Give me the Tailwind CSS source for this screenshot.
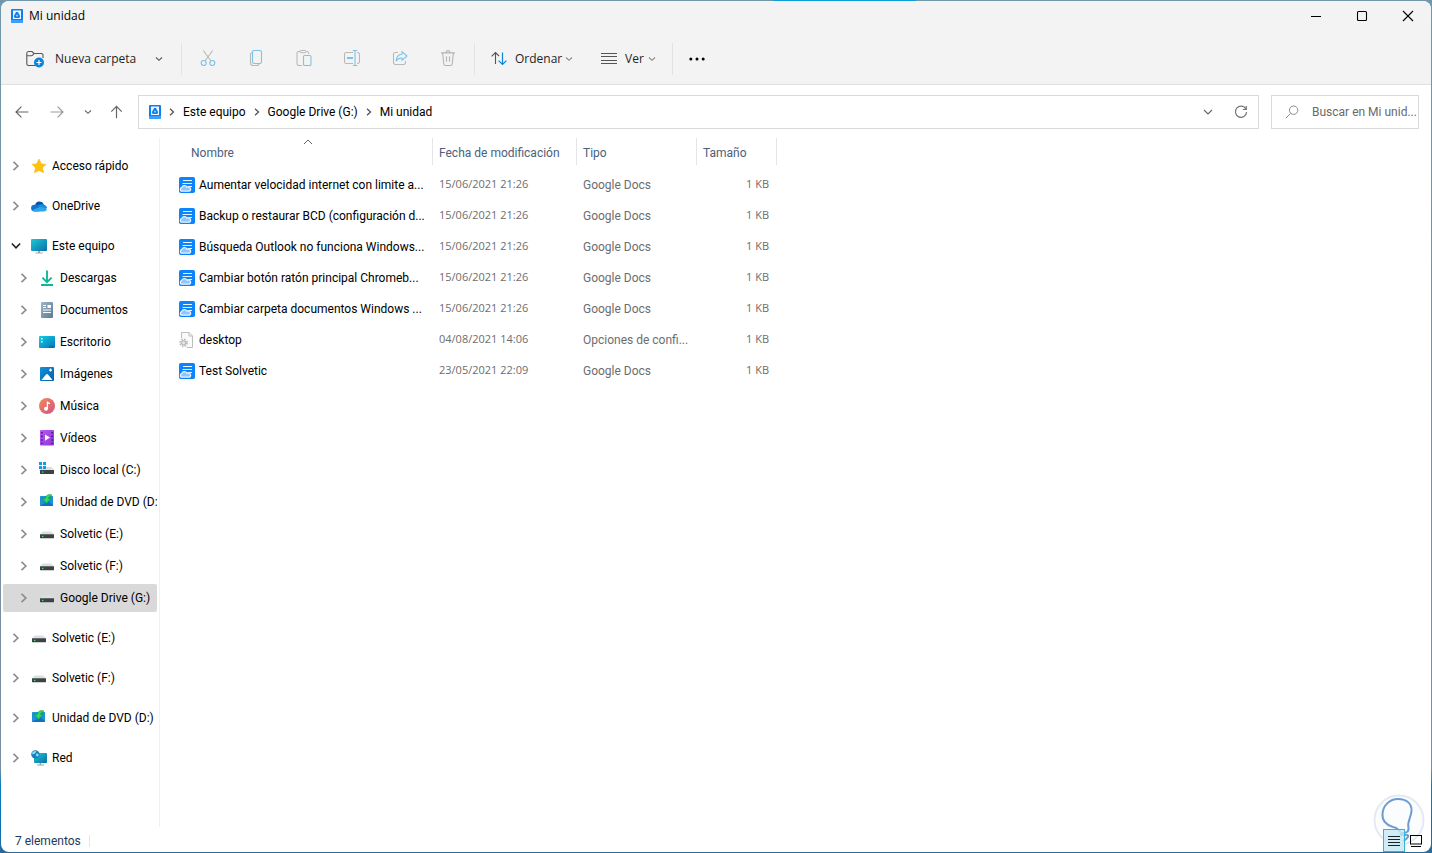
<!DOCTYPE html>
<html lang="es">
<head>
  <meta charset="UTF-8" />
  <meta name="viewport" content="width=device-width, initial-scale=1.0"/>
  <title>Mi unidad</title>
  <script src="https://cdn.jsdelivr.net/npm/@tailwindcss/browser@4"></script>
</head>
<body class="relative h-screen overflow-hidden p-px font-['Open_Sans','Noto_Sans',sans-serif] text-xs text-black bg-[linear-gradient(#7097ab_0,#7b8fa0_50%,#7b8fa0_90%,#0a7fbf_92%,#0a6fae_97%,#2a6a9c_100%)]">
  <div class="absolute top-0 left-[54%] w-[10%] h-px bg-[#0a9fd8]"></div>

  <!-- icon sprites -->
  <svg class="absolute h-0 w-0" xmlns="http://www.w3.org/2000/svg">
    <defs>
      <linearGradient id="g-screen" x1="0" y1="0" x2="1" y2="1"><stop offset="0" stop-color="#1bc8d8"/><stop offset="1" stop-color="#0a6fa5"/></linearGradient>
      <linearGradient id="g-desk" x1="0" y1="0" x2="1" y2="1"><stop offset="0" stop-color="#10cfe0"/><stop offset="1" stop-color="#0874bd"/></linearGradient>
      <linearGradient id="g-doc" x1="0" y1="0" x2="1" y2="1"><stop offset="0" stop-color="#9db6c9"/><stop offset="1" stop-color="#5b7a98"/></linearGradient>
      <linearGradient id="g-img" x1="0" y1="0" x2="1" y2="1"><stop offset="0" stop-color="#1590dc"/><stop offset="1" stop-color="#0560a8"/></linearGradient>
      <linearGradient id="g-music" x1="0" y1="0" x2="1" y2="1"><stop offset="0" stop-color="#f5885a"/><stop offset="1" stop-color="#cf5484"/></linearGradient>
      <linearGradient id="g-video" x1="0" y1="0" x2="1" y2="1"><stop offset="0" stop-color="#b85cf0"/><stop offset="1" stop-color="#8d35d6"/></linearGradient>
    </defs>
    <symbol id="i-chev" viewBox="0 0 8 8"><path d="M2 .7 5.5 4 2 7.3" fill="none" stroke="currentColor" stroke-width="1.3"/></symbol>
    <symbol id="i-down" viewBox="0 0 8 8"><path d="M1 2.5 4 5.3 7 2.5" fill="none" stroke="currentColor" stroke-width="1.1"/></symbol>
    <symbol id="i-drive" viewBox="0 0 12 14">
      <rect width="12" height="14" rx="1" fill="#0f7ff0"/>
      <rect x="2" y="1.500" width="8" height="8.500" fill="#eef7ff"/>
      <path d="M5 3h2L9.200 7.200 8.300 9H3.700L2.800 7.200Z" fill="#0f7ff0"/>
      <path d="M6 5.400 7 7.200H5Z" fill="#eef7ff"/>
      <path d="M0 11h12v2q0 1-1 1H1q-1 0-1-1Z" fill="#3aa0ff"/>
    </symbol>
    <symbol id="i-star" viewBox="0 0 16 16"><path d="M8 1.200 10.200 5.900 14.800 6.400 11.400 9.800 12.400 14.600 8 12.300 3.600 14.600 4.600 9.800 1.200 6.400 5.800 5.900Z" fill="#fdc20c" stroke="#f9bb06" stroke-width=".8" stroke-linejoin="round"/></symbol>
    <symbol id="i-onedrive" viewBox="0 0 16 16">
      <path d="M4 7.200A4.700 4.700 0 0 1 12.900 6.400L9 10Z" fill="#0a53a8"/>
      <path d="M3.400 13.400A3.300 3.300 0 0 1 3.500 6.700Q5.400 5.900 7.400 7.200L12 10 8 13.400Z" fill="#1173cf"/>
      <path d="M7.200 7.400Q9.800 5.800 12.400 6.400 16 7.200 16 10.300L12 11.600Z" fill="#1490df"/>
      <path d="M1 12.200 9.200 8.700 15.900 10.800Q15.600 13.400 12.800 13.400H3.400Q2 13.300 1 12.200Z" fill="#2aa8ea"/>
    </symbol>
    <symbol id="i-pc" viewBox="0 0 16 16">
      <rect y="1" width="16" height="12" rx="1" fill="url(#g-screen)"/>
      <path d="M7 13h2v1.400H7zM4.500 14.400h7v1h-7z" fill="#9aa7b0"/>
    </symbol>
    <symbol id="i-dl" viewBox="0 0 16 16"><path d="M8 .4V12M3.400 7.600 8 12.100 12.600 7.600M2 15h12" fill="none" stroke="#12b594" stroke-width="1.900"/></symbol>
    <symbol id="i-doc" viewBox="0 0 16 16">
      <rect x="2" width="12" height="16" rx="1" fill="url(#g-doc)"/>
      <path d="M4 3.500h3M4 5.500h3M4 8h8M4 10.500h8" stroke="#fff" stroke-width="1"/><rect x="8.500" y="3" width="3.500" height="3" fill="#fff"/>
    </symbol>
    <symbol id="i-desk" viewBox="0 0 16 16">
      <rect y="2" width="16" height="12" rx="1" fill="url(#g-desk)"/>
      <path d="M2 4h1.500v1.500H2zM2 7h1.500v1.500H2z" fill="#fff"/><path d="M10 13h1.500M12.500 13H14" stroke="#064a80"/>
    </symbol>
    <symbol id="i-img" viewBox="0 0 16 16">
      <rect x="1" y="1" width="14" height="14" rx="1" fill="url(#g-img)"/>
      <path d="M2.500 14 7 8.600Q8 7.600 9 8.600L13.500 14Z" fill="#fff"/><path d="M11.500 2.600v3M10 4.100h3" stroke="#fff" stroke-width="1.200"/>
    </symbol>
    <symbol id="i-music" viewBox="0 0 16 16">
      <circle cx="8" cy="8" r="8" fill="url(#g-music)"/>
      <path d="M8.400 10.600V3.600Q9 5.400 11 5.600" fill="none" stroke="#fff" stroke-width="1.300"/><circle cx="7" cy="10.800" r="2" fill="#fff"/>
    </symbol>
    <symbol id="i-video" viewBox="0 0 16 16">
      <rect x="1" y="0" width="14" height="15.500" rx="1" fill="url(#g-video)"/>
      <path d="M6 4.400 11 7.600 6 10.800Z" fill="#fff"/>
      <path d="M2.900 2v12M13.100 2v12" stroke="#4c1687" stroke-width="1.600" stroke-dasharray="1.600 2"/>
    </symbol>
    <symbol id="i-hdd" viewBox="0 0 16 16">
      <path d="M3.600 5.500h8.800L15 8.500H1Z" fill="#dcdfe1"/><rect x="1" y="8.200" width="14" height="4" rx=".4" fill="#3d4245"/><rect x="3" y="9.800" width="1.400" height="1.200" fill="#4be07a"/>
    </symbol>
    <symbol id="i-disk" viewBox="0 0 16 16">
      <path d="M3.600 5h8.800L15 8H1Z" fill="#dcdfe1"/><rect x="1" y="8" width="14" height="4" rx=".4" fill="#3d4245"/><rect x="3" y="9.500" width="1.400" height="1.200" fill="#4be07a"/>
      <path d="M0 0h3v3H0zM4 0h3v3H4zM0 4h3v3H0zM4 4h3v3H4z" fill="#0f9be8"/>
    </symbol>
    <symbol id="i-dvd" viewBox="0 0 16 16">
      <rect x="1" y="2" width="13" height="10" rx=".8" fill="#1f8fdd"/><path d="M1 12 9 7l5 4.200q0 .8-.8.8Z" fill="#1570bd"/>
      <path d="M12.400.6Q7 0 6.200 4.400H3.400L7.600 9.400 11.600 4.400H9.400Q9.400 2.600 12.400 2.200Z" fill="#2bdc63" stroke="#128a3a" stroke-width=".5"/>
    </symbol>
    <symbol id="i-net" viewBox="0 0 16 16">
      <rect x="3" y="3" width="13" height="10" rx=".8" fill="url(#g-screen)"/><path d="M8.600 13h1.600v1.600H8.600zM6 14.500h7v1H6z" fill="#9aa7b0"/>
      <circle cx="4.400" cy="4.400" r="4.200" fill="#1a7fc0"/><path d="M1.200 2.600Q3 .6 5.400 1.200L4 3.600 1.400 4.600ZM5.600 3.200 8 4.400 6.600 6.800 4.800 5.400Z" fill="#8fe0f4"/>
    </symbol>
    <symbol id="i-gdoc" viewBox="0 0 16 16">
      <rect width="16" height="16" rx="1.800" fill="#0c84fb"/>
      <path d="M4 3.500h9M3.500 6.500h9.500M10 9.500h3" stroke="#e8f4ff" stroke-width="1.200"/>
      <path d="M2.200 14.200A2.100 2.100 0 0 1 2.600 10.600 2.900 2.900 0 0 1 8 10.200 2.200 2.200 0 0 1 10.400 14.200Z" fill="#8cc6ff" stroke="#e8f4ff" stroke-width="1.200"/>
    </symbol>
    <symbol id="i-ini" viewBox="0 0 16 16">
      <path d="M2.500 6V.5H10L13.500 4v11.500H8M10 .5V4h3.500" fill="#fafafa" stroke="#bdbdbd"/>
      <circle cx="4.600" cy="10.800" r="3.400" fill="none" stroke="#c2c2c2" stroke-width="2" stroke-dasharray="1.600 1.070"/><circle cx="4.600" cy="10.800" r="2.200" fill="#e4e4e4" stroke="#b0b0b0"/>
    </symbol>
  </svg>

  <div class="relative flex h-full flex-col overflow-hidden rounded-lg bg-white">
    <!-- title bar -->
    <header class="flex h-[30px] shrink-0 items-center bg-[#f3f3f3] pl-2.5">
      <svg class="h-3.5 w-3"><use href="#i-drive"/></svg>
      <h1 class="ml-1.5">Mi unidad</h1>
      <div class="ml-auto flex">
        <button aria-label="Minimizar" class="flex h-7 w-[46px] items-center justify-center"><svg class="h-3 w-3" viewBox="0 0 12 12"><path d="M1 6.500h10" stroke="#000"/></svg></button>
        <button aria-label="Maximizar" class="flex h-7 w-[46px] items-center justify-center"><svg class="h-3 w-3" viewBox="0 0 12 12"><rect x="1.500" y="1.500" width="9" height="9" rx="1" fill="none" stroke="#000" stroke-width="1.100"/></svg></button>
        <button aria-label="Cerrar" class="flex h-7 w-[46px] items-center justify-center"><svg class="h-3 w-3" viewBox="0 0 12 12"><path d="m1 1 10 10M11 1 1 11" stroke="#000" stroke-width="1.100"/></svg></button>
      </div>
    </header>

    <!-- toolbar -->
    <div class="flex h-[54px] shrink-0 items-center border-b border-[#e1e1e1] bg-[#f3f3f3] pt-0.5 pl-[25px] text-[#1f1f1f]">
      <button class="flex w-[155px] items-center pr-[18px]">
        <svg class="h-[18px] w-[18px]" viewBox="0 0 18 18">
          <path d="M9 15.500H2.500A1.800 1.800 0 0 1 .8 13.700V3.300A1.800 1.800 0 0 1 2.500 1.500H6L8 3.500h7.300a1.700 1.700 0 0 1 1.700 1.700V8M.8 5.800H5.400Q6.400 5.800 8 3.500" fill="none" stroke="#555" stroke-width="1.100"/>
          <circle cx="13" cy="12.500" r="5" fill="#0a84d8"/><path d="M13 10v5M10.500 12.500h5" stroke="#fff" stroke-width="1.200"/>
        </svg>
        <span class="ml-[11px]">Nueva carpeta</span>
        <svg class="ml-auto h-2 w-2 text-[#555]"><use href="#i-down"/></svg>
      </button>
      <span class="h-8 w-px bg-[#e2e2e2]"></span>
      <div class="flex gap-8 px-[18px] pb-0.5">
        <button aria-label="Cortar"><svg class="block h-4 w-4" viewBox="0 0 16 16"><path d="M3.300.5 11 11M12.700.5 5 11" stroke="#b9b9b9" stroke-width="1.100"/><g fill="none" stroke="#7cc3ea" stroke-width="1.200"><circle cx="3.700" cy="13" r="2.500"/><circle cx="12.300" cy="13" r="2.500"/></g></svg></button>
        <button aria-label="Copiar"><svg class="block h-4 w-4" viewBox="0 0 16 16"><path d="M4 2.500Q2.500 3 2.500 4.500v8.200a2.800 2.800 0 0 0 2.800 2.800H9q1.500 0 2-1.500" fill="none" stroke="#b9b9b9" stroke-width="1.100"/><rect x="4.500" y=".5" width="9" height="13" rx="1.800" fill="#f3f3f3" stroke="#7cc3ea" stroke-width="1.100"/></svg></button>
        <button aria-label="Pegar"><svg class="block h-4 w-4" viewBox="0 0 16 16"><path d="M6 15.500H2.800A1.800 1.800 0 0 1 1 13.700V3.300a1.800 1.800 0 0 1 1.800-1.800H4m6 0h1A1.800 1.800 0 0 1 12.700 3.300V4" fill="none" stroke="#b9b9b9" stroke-width="1.100"/><rect x="4" y=".5" width="6" height="2.200" rx="1" fill="none" stroke="#b9b9b9"/><rect x="7.500" y="5.500" width="7.500" height="10" rx="1.200" fill="#f3f3f3" stroke="#7cc3ea" stroke-width="1.100"/></svg></button>
        <button aria-label="Cambiar nombre"><svg class="block h-4 w-4" viewBox="0 0 16 16"><path d="M9 2.500H2.300A1.800 1.800 0 0 0 .5 4.300v7.400a1.800 1.800 0 0 0 1.800 1.800H9m4-11h.7a1.800 1.800 0 0 1 1.800 1.800v7.400a1.800 1.800 0 0 1-1.800 1.800H13" fill="none" stroke="#b9b9b9" stroke-width="1.100"/><path d="M3 8h6" stroke="#7cc3ea" stroke-width="2"/><path d="M11 .5v15M8.800.5h4.400M8.800 15.500h4.400" stroke="#7cc3ea" stroke-width="1.100"/></svg></button>
        <button aria-label="Compartir"><svg class="block h-4 w-4" viewBox="0 0 16 16"><path d="M6 2.500H3.300A1.800 1.800 0 0 0 1.500 4.300v8.400a1.800 1.800 0 0 0 1.800 1.800h8.400a1.800 1.800 0 0 0 1.800-1.800V11" fill="none" stroke="#b9b9b9" stroke-width="1.100"/><path d="M10 1.600 15 6l-5 4.400V8Q6.400 7.600 4.200 11 4.600 4.600 10 4.200Z" fill="none" stroke="#7cc3ea" stroke-width="1.100" stroke-linejoin="round"/></svg></button>
        <button aria-label="Eliminar"><svg class="block h-4 w-4" viewBox="0 0 16 16"><path d="M1 2.900h14M5.800 2.700Q6 .6 8 .6t2.200 2.100M2.600 3 3.800 14q.2 1.500 1.600 1.500h5.200q1.400 0 1.600-1.500L13.400 3M6.500 6.200v5.600M9.500 6.200v5.600" fill="none" stroke="#b4b4b4" stroke-width="1.100"/></svg></button>
      </div>
      <span class="h-8 w-px bg-[#e2e2e2]"></span>
      <button class="ml-4 flex w-[82px] items-center">
        <svg class="h-4 w-4" viewBox="0 0 16 16"><path d="M4.500 13V1.600M.6 5.400 4.500 1.500 8 5" fill="none" stroke="#555" stroke-width="1.100"/><path d="M11.500 1.500v12M7.600 9.600l3.900 3.900 3.900-3.900" fill="none" stroke="#0a84d8" stroke-width="1.200"/></svg>
        <span class="ml-2">Ordenar</span>
        <svg class="ml-auto h-2 w-2 text-[#888]"><use href="#i-down"/></svg>
      </button>
      <button class="ml-7 flex w-[55px] items-center">
        <svg class="h-4 w-4" viewBox="0 0 16 16"><path d="M0 2.500h16M0 5.500h16M0 9.500h16M0 12.500h16" stroke="#555"/></svg>
        <span class="ml-2">Ver</span>
        <svg class="ml-auto h-2 w-2 text-[#888]"><use href="#i-down"/></svg>
      </button>
      <span class="ml-4 h-8 w-px bg-[#e2e2e2]"></span>
      <button aria-label="Más opciones" class="ml-4"><svg class="block h-4 w-4" viewBox="0 0 16 16"><circle cx="1.800" cy="8" r="1.500"/><circle cx="8" cy="8" r="1.500"/><circle cx="14.200" cy="8" r="1.500"/></svg></button>
    </div>

    <!-- navigation and address -->
    <div class="flex h-[53px] shrink-0 items-center pr-3 pl-3.5">
      <nav class="flex w-[123px] items-center text-[#666]">
        <button aria-label="Atrás"><svg class="block h-3.5 w-3.5" viewBox="0 0 14 14"><path d="M13.400 7H1.200M6.400 1.600 1 7l5.400 5.400" fill="none" stroke="currentColor" stroke-width="1.200"/></svg></button>
        <button aria-label="Adelante" class="ml-[21px] text-[#999]"><svg class="block h-3.5 w-3.5" viewBox="0 0 14 14"><path d="M.6 7h12.200M7.600 1.600 13 7l-5.400 5.400" fill="none" stroke="currentColor" stroke-width="1.200"/></svg></button>
        <button aria-label="Ubicaciones recientes" class="ml-5"><svg class="block h-2 w-2"><use href="#i-down"/></svg></button>
        <button aria-label="Subir" class="ml-[18px]"><svg class="block h-3.5 w-3.5" viewBox="0 0 14 14"><path d="M6.500 13.200V1.400M1.300 6.600 6.500 1.400l5.200 5.200" fill="none" stroke="currentColor" stroke-width="1.200"/></svg></button>
      </nav>
      <div class="flex h-[34px] flex-1 items-center border border-[#d9d9d9] px-2.5 font-[Roboto,sans-serif]">
        <svg class="h-3.5 w-3"><use href="#i-drive"/></svg>
        <svg class="mx-[7px] h-2 w-2 text-[#555]"><use href="#i-chev"/></svg>
        <a href="#">Este equipo</a>
        <svg class="mx-[7px] h-2 w-2 text-[#555]"><use href="#i-chev"/></svg>
        <a href="#">Google Drive (G:)</a>
        <svg class="mx-[7px] h-2 w-2 text-[#555]"><use href="#i-chev"/></svg>
        <a href="#">Mi unidad</a>
        <button aria-label="Ubicaciones anteriores" class="ml-auto"><svg class="block h-2.5 w-2.5" viewBox="0 0 10 10"><path d="M1 3 5 7l4-4" fill="none" stroke="#666" stroke-width="1.100"/></svg></button>
        <button aria-label="Actualizar" class="ml-[21px]"><svg class="block h-3.5 w-3.5" viewBox="0 0 14 14"><path d="M12 4.200A5.600 5.600 0 1 0 12.600 7M12.300 1v3.500H8.800" fill="none" stroke="#777" stroke-width="1.200"/></svg></button>
      </div>
      <label class="ml-3 flex h-[34px] w-[148px] items-center border border-[#d9d9d9] pl-[13px]">
        <svg class="h-3.5 w-3.5 shrink-0" viewBox="0 0 14 14"><circle cx="8.600" cy="5.200" r="4.200" fill="none" stroke="#8a8a8a"/><path d="M5.600 8.400.8 13.200" stroke="#8a8a8a"/></svg>
        <input type="text" aria-label="Buscar" placeholder="Buscar en Mi unid..." class="ml-[13px] w-full min-w-0 font-[Roboto,sans-serif] outline-none placeholder:text-[#6a6a6a]"/>
      </label>
    </div>

    <div class="flex min-h-0 flex-1">
      <aside class="w-[159px] shrink-0 border-r border-[#f0f0f0] px-0.5 pt-0.5 font-[Roboto,sans-serif]">
        <ul id="tree"></ul>
      </aside>
      <main class="flex-1 overflow-hidden font-[Roboto,sans-serif]">
        <table class="w-[617px] table-fixed text-left text-[#6d6d6d]">
          <colgroup><col class="w-[273px]"/><col class="w-36"/><col class="w-[120px]"/><col class="w-20"/></colgroup>
          <thead class="text-[#4c607a]">
            <tr class="h-[31px] align-top">
              <th class="p-0 font-normal"><div class="relative h-[27px] border-r border-[#e5e5e5] pl-[31px] leading-[30px]">Nombre
                <svg class="absolute top-0 left-[143px] h-2 w-2.5" viewBox="0 0 10 8"><path d="M1 6 5 2l4 4" fill="none" stroke="#666"/></svg></div></th>
              <th class="p-0 font-normal"><div class="h-[27px] border-r border-[#e5e5e5] pl-1.5 leading-[30px]">Fecha de modificación</div></th>
              <th class="p-0 font-normal"><div class="h-[27px] border-r border-[#e5e5e5] pl-1.5 leading-[30px]">Tipo</div></th>
              <th class="p-0 font-normal"><div class="h-[27px] border-r border-[#e5e5e5] pl-1.5 leading-[30px]">Tamaño</div></th>
            </tr>
          </thead>
          <tbody id="files"></tbody>
        </table>
      </main>
    </div>

    <footer class="flex h-[25px] shrink-0 items-center pt-0.5 pl-3.5 font-[Roboto,sans-serif] text-[#1e395b]">
      <span class="w-[74px]">7 elementos</span>
      <span class="h-3 w-px bg-[#e5e5e5]"></span>
    </footer>

    <!-- floating logo and view switches -->
    <svg class="absolute right-1.5 bottom-1.5 h-[52px] w-[52px]" viewBox="0 0 52 52">
      <circle cx="26" cy="26" r="24.500" fill="#fbfcfe" stroke="#e3eaf4" stroke-width="2"/>
      <path d="M20 33C13 31 9 26 9.500 20 10 11 17 5 25 5 34 5 39 10 38.500 17 38 24 34 27 35.500 34 36 38 33 39 29 39 26 40 28 42 32 41 37 40 36 44 30 47M20 33Q25 34 27 38" fill="none" stroke="#6d9bd2" stroke-width="2"/>
    </svg>
    <div class="absolute right-1 bottom-0 flex items-center">
      <button aria-label="Detalles" class="flex h-[23px] w-[22px] items-center justify-center border border-[#33b5d8] bg-[#c3e9f5]/80"><svg class="h-3 w-3" viewBox="0 0 12 12"><path d="M0 1.500h12M0 4.500h12M0 7.500h12M0 10.500h12" stroke="#222"/></svg></button>
      <button aria-label="Iconos grandes" class="flex h-[23px] w-[22px] items-center justify-center"><svg class="h-3 w-3" viewBox="0 0 12 12"><rect x=".5" y=".5" width="11" height="8.500" fill="none" stroke="#000"/><path d="M1 11.500h10" stroke="#000"/></svg></button>
    </div>
  </div>

<script>
const tree = [
  {icon:'i-star', label:'Acceso rápido'},
  {icon:'i-onedrive', label:'OneDrive'},
  {icon:'i-pc', label:'Este equipo', open:true},
  {icon:'i-dl', label:'Descargas', child:true},
  {icon:'i-doc', label:'Documentos', child:true},
  {icon:'i-desk', label:'Escritorio', child:true},
  {icon:'i-img', label:'Imágenes', child:true},
  {icon:'i-music', label:'Música', child:true},
  {icon:'i-video', label:'Vídeos', child:true},
  {icon:'i-disk', label:'Disco local (C:)', child:true},
  {icon:'i-dvd', label:'Unidad de DVD (D:', child:true},
  {icon:'i-hdd', label:'Solvetic (E:)', child:true},
  {icon:'i-hdd', label:'Solvetic (F:)', child:true},
  {icon:'i-hdd', label:'Google Drive (G:)', child:true, active:true},
  {icon:'i-hdd', label:'Solvetic (E:)'},
  {icon:'i-hdd', label:'Solvetic (F:)'},
  {icon:'i-dvd', label:'Unidad de DVD (D:)'},
  {icon:'i-net', label:'Red'}
];

const files = [
  ['i-gdoc','Aumentar velocidad internet con limite a...','15/06/2021 21:26','Google Docs'],
  ['i-gdoc','Backup o restaurar BCD (configuración d...','15/06/2021 21:26','Google Docs'],
  ['i-gdoc','Búsqueda Outlook no funciona Windows...','15/06/2021 21:26','Google Docs'],
  ['i-gdoc','Cambiar botón ratón principal Chromeb...','15/06/2021 21:26','Google Docs'],
  ['i-gdoc','Cambiar carpeta documentos Windows ...','15/06/2021 21:26','Google Docs'],
  ['i-ini','desktop','04/08/2021 14:06','Opciones de confi...'],
  ['i-gdoc','Test Solvetic','23/05/2021 22:09','Google Docs']
];

document.getElementById('tree').innerHTML = tree.map(n => `
  <li class="${n.child ? 'mt-1' : 'mt-3'}">
    <a href="#" class="flex h-7 items-center overflow-hidden rounded-xs whitespace-nowrap ${n.child ? 'pl-4' : 'pl-2'} ${n.active ? 'bg-[#d9d9d9]' : ''}">
      <svg class="h-2.5 w-2.5 shrink-0 ${n.open ? 'rotate-90 text-[#222]' : 'text-[#8b8b8b]'}"><use href="#i-chev"/></svg>
      <svg class="ml-2.5 h-4 w-4 shrink-0"><use href="#${n.icon}"/></svg>
      <span class="ml-[5px]">${n.label}</span>
    </a>
  </li>`).join('');

document.getElementById('files').innerHTML = files.map(f => `
  <tr class="h-[31px] whitespace-nowrap">
    <td class="overflow-hidden p-0 pl-[19px] text-black"><div class="flex items-center"><svg class="h-4 w-4 shrink-0"><use href="#${f[0]}"/></svg><span class="ml-1">${f[1]}</span></div></td>
    <td class="p-0 pl-1.5 font-['Open_Sans',sans-serif] text-[11px]">${f[2]}</td>
    <td class="p-0 pl-1.5">${f[3]}</td>
    <td class="p-0 pr-2 text-right font-['Open_Sans',sans-serif] text-[11px]">1 KB</td>
  </tr>`).join('');
</script>
</body>
</html>
